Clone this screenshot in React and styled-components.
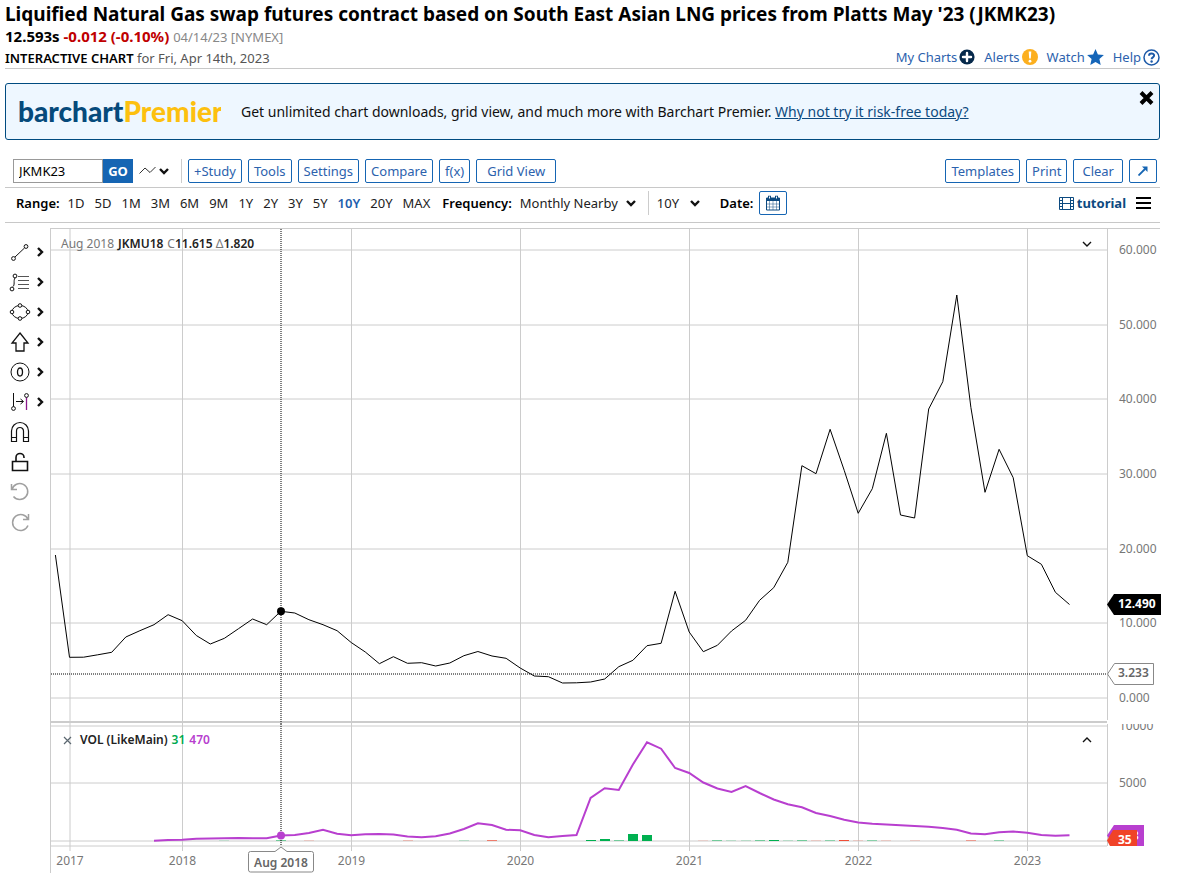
import React from "react";
import styled, { createGlobalStyle, css } from "styled-components";

const GlobalStyle = createGlobalStyle`
  * {
    box-sizing: border-box;
  }

  body {
    margin: 0;
    background: #fff;
    color: #000;
    font-family: "Noto Sans", "Open Sans", sans-serif;
    font-size: 13px;
    line-height: 18px;
  }

  button, input, select {
    font-family: inherit;
    font-size: inherit;
    line-height: inherit;
    color: inherit;
  }

  svg {
    display: block;
    flex: none;
  }
`;

const Page = styled.main`
  padding: 2px 23px 8px 5px;
`;

const Title = styled.h1`
  margin: 0;
  font-size: 19px;
  line-height: 25px;
  font-weight: 700;
`;

const Quote = styled.div`
  font-size: 15px;
  line-height: 18px;
  font-weight: 700;
`;

const Change = styled.span`
  color: #c00000;
`;

const QuoteDate = styled.span`
  font-size: 13px;
  font-weight: 400;
  color: #888;
`;

const SubHeader = styled.div`
  display: flex;
  justify-content: space-between;
  align-items: flex-start;
  height: 23px;
  padding-top: 3px;
  border-bottom: 1px solid #c8c8c8;
`;

const SubTitle = styled.h2`
  margin: 0;
  font-size: 13px;
  font-weight: 600;

  span {
    font-weight: 400;
    color: #555;
  }
`;

const Links = styled.nav`
  display: flex;
  gap: 9px;
`;

const IconLink = styled.a`
  display: flex;
  align-items: center;
  gap: 2px;
  height: 16px;
  color: #2c62ad;
  text-decoration: none;
`;

const Banner = styled.section`
  display: flex;
  align-items: center;
  gap: 20px;
  height: 57px;
  margin: 14px 0 18px;
  padding: 0 5px 0 13px;
  border: 1px solid #004b80;
  border-radius: 3px;
  background: #eef7ff;
`;

const BannerText = styled.p`
  flex: 1;
  margin: 0;
  font-size: 14px;
  color: #111;

  a {
    color: #0d4a80;
  }
`;

const CloseButton = styled.button`
  align-self: flex-start;
  margin-top: 7px;
  padding: 0;
  border: 0;
  background: none;
`;

const Toolbar = styled.div`
  display: flex;
  align-items: center;
  gap: 6px;
  height: 30px;
  padding: 0 3px 4px 8px;
  border-bottom: 1px solid #c8c8c8;
`;

const SearchForm = styled.form`
  display: flex;
`;

const SymbolInput = styled.input`
  width: 90px;
  height: 24px;
  padding: 0 5px;
  border: 1px solid #999;
  border-radius: 0;
`;

const GoButton = styled.button`
  width: 30px;
  height: 24px;
  padding: 0;
  border: 0;
  background: #1565b3;
  color: #fff;
  font-weight: 700;
`;

const ChartTypeButton = styled.button`
  display: flex;
  align-items: center;
  gap: 2px;
  height: 24px;
  margin-right: 5px;
  padding: 0;
  border: 0;
  background: none;
`;

const Divider = styled.span`
  width: 1px;
  height: 24px;
  background: #ccc;
`;

const ToolButton = styled.button`
  display: flex;
  align-items: center;
  justify-content: center;
  height: 24px;
  padding: 0 ${({ $pad = 5 }) => $pad}px;
  border: 1px solid #1565b3;
  border-radius: 2px;
  background: #fff;
  color: #2c62ad;
`;

const Spacer = styled.span`
  flex: 1;
`;

const RangeBar = styled.div`
  display: flex;
  align-items: center;
  height: 35px;
  margin-bottom: 5px;
  padding: 0 9px 4px 11px;
  border-bottom: 1px solid #c8c8c8;
`;

const BarLabel = styled.label`
  font-weight: 600;
`;

const RangeList = styled.div`
  display: flex;
  gap: 10px;
  margin: 0 12px 0 8px;
`;

const RangeButton = styled.button`
  padding: 0;
  border: 0;
  background: none;
  color: #222;

  ${({ $active }) =>
    $active &&
    css`
      color: #1f5fae;
      font-weight: 600;
    `}
`;

const SelectWrap = styled.span`
  display: flex;
  align-items: center;
  margin: 0 ${({ $after }) => $after}px 0 8px;
`;

const Select = styled.select`
  appearance: none;
  width: ${({ $width }) => $width}px;
  margin-right: -12px;
  padding: 0 12px 0 0;
  border: 0;
  background: none;
  color: #222;
`;

const DateButton = styled(ToolButton)`
  width: 28px;
  margin-left: 6px;
  padding: 0;
`;

const TutorialLink = styled.a`
  display: flex;
  align-items: center;
  gap: 3px;
  margin-right: 10px;
  color: #0d4a80;
  font-weight: 700;
  text-decoration: none;
`;

const MenuButton = styled.button`
  padding: 0;
  border: 0;
  background: none;
`;

const Workspace = styled.div`
  display: flex;
  align-items: flex-start;
`;

const ToolColumn = styled.div`
  display: flex;
  flex-direction: column;
  flex: none;
  width: 45px;
  padding: 9px 0 0 4px;
`;

const DrawButton = styled.button`
  display: flex;
  align-items: center;
  gap: 3px;
  height: 30px;
  padding: 0;
  border: 0;
  background: none;
  color: ${({ $muted }) => ($muted ? "#a0a0a0" : "#111")};
`;

const Panes = styled.div`
  flex: 1;
  min-width: 0;
`;

const Pane = styled.div`
  position: relative;
`;

const PaneSvg = styled.svg`
  width: 100%;
  overflow: ${({ $clip }) => ($clip ? "hidden" : "visible")};
  font-size: 12px;
`;

const Legend = styled.div`
  position: absolute;
  top: 8px;
  left: 11px;
  right: 67px;
  display: flex;
  align-items: center;
  gap: 4px;
  font-size: 12px;
  line-height: 16px;
  font-weight: 600;
  color: #222;
`;

const Muted = styled.span`
  font-weight: 400;
  color: #777;
`;

const Value = styled.span`
  color: ${({ $color }) => $color};
`;

const PaneToggle = styled.button`
  margin-left: auto;
  padding: 0;
  border: 0;
  background: none;
`;

const RemoveButton = styled.button`
  padding: 0 4px 0 2px;
  border: 0;
  background: none;
`;

const ranges = ["1D", "5D", "1M", "3M", "6M", "9M", "1Y", "2Y", "3Y", "5Y", "10Y", "20Y", "MAX"];

const years = [
  { label: "2017", x: 70 },
  { label: "2018", x: 182.5 },
  { label: "2019", x: 351.5 },
  { label: "2020", x: 520.5 },
  { label: "2021", x: 689.5 },
  { label: "2022", x: 858.5 },
  { label: "2023", x: 1027.5 },
];

const priceTicks = [
  { label: "60.000", y: 250 },
  { label: "50.000", y: 325 },
  { label: "40.000", y: 399 },
  { label: "30.000", y: 474 },
  { label: "20.000", y: 549 },
  { label: "10.000", y: 623 },
  { label: "0.000", y: 698 },
];

// one entry per month, Dec 2016 - Apr 2023
const prices = [
  555, 657.3, 657.2, 654.8, 652.3, 637, 630.7, 624.7, 614.7, 620.7, 635.5, 644, 638.3, 628.7,
  619, 624.7, 611.3, 613, 619.7, 624.7, 630.7, 642.5, 652, 663.7, 656.7, 663.3, 662.7, 666, 663,
  655.7, 651.5, 656, 658.3, 668, 676, 676.7, 683, 682.8, 682, 679, 666.7, 660.3, 645.7, 643.3,
  591.3, 632, 651.7, 645.3, 631, 620.3, 600.3, 587.7, 562.3, 465.7, 473.7, 429.3, 470.3, 513.3,
  488.7, 433.3, 515, 518, 409, 381.7, 295, 407.5, 492.3, 449.3, 477.7, 555.7, 564.3, 592.3,
  604.5,
];

const volumes = [
  840.7, 840, 839.7, 838.7, 838.5, 838.2, 838, 838.2, 838.3, 835.5, 835, 833, 829.7, 833.7,
  835.3, 834.3, 834, 834.5, 836.5, 837.3, 836.3, 833.5, 829, 823.3, 825, 829.8, 830.3, 835,
  837.3, 836, 835, 798, 788.3, 790, 764.5, 742.3, 748.7, 768, 773, 782.5, 788.5, 792, 786, 793,
  799.5, 804.3, 807.3, 813, 816, 819.7, 822.5, 823.7, 824.5, 825.3, 826, 826.7, 828, 829.7,
  833.5, 834.3, 832.3, 831.5, 832.8, 835, 835.8, 835.3,
];

const bars = [
  { month: 12, opacity: 0.15 },
  { month: 16, opacity: 0.5 },
  { month: 18, opacity: 0.2, down: true },
  { month: 25, opacity: 0.3, down: true },
  { month: 29, opacity: 0.2 },
  { month: 31, opacity: 0.7, down: true },
  { month: 38, height: 1 },
  { month: 39, height: 2 },
  { month: 40, opacity: 0.5 },
  { month: 41, height: 7 },
  { month: 42, height: 6 },
  { month: 46, opacity: 0.15, down: true },
  { month: 47, opacity: 0.5 },
  { month: 48, opacity: 0.2 },
  { month: 49, opacity: 0.2 },
  { month: 50, opacity: 0.5 },
  { month: 51 },
  { month: 52, opacity: 0.2 },
  { month: 53, opacity: 0.5 },
  { month: 54, opacity: 0.2, down: true },
  { month: 55, opacity: 0.4 },
  { month: 56, down: true },
  { month: 57, opacity: 0.2, down: true },
  { month: 58, opacity: 0.4 },
  { month: 59, opacity: 0.2, down: true },
  { month: 61, opacity: 0.2, down: true },
  { month: 65, opacity: 0.5, down: true },
  { month: 67, opacity: 0.4 },
];

const monthX = (i) => 55.4 + i * 14.085;

const toPoints = (values, start = 0) =>
  values.map((y, i) => `${monthX(i + start).toFixed(1)},${y}`).join(" ");

const Chevron = ({ size = 12, width = 2.4, direction = "down" }) => {
  const paths = { down: "M2 4l4 4 4-4", up: "M2 8l4-4 4 4", right: "M4 2l4 4-4 4" };
  return (
    <svg width={size} height={size} viewBox="0 0 12 12" fill="none" stroke="#111" strokeWidth={width}>
      <path d={paths[direction]} />
    </svg>
  );
};

const PlusCircle = () => (
  <svg width="16" height="16" viewBox="0 0 16 16">
    <circle cx="8" cy="8" r="7.6" fill="#06294b" />
    <path d="M8 4v8M4 8h8" stroke="#fff" strokeWidth="2.4" strokeLinecap="round" />
  </svg>
);

const AlertCircle = () => (
  <svg width="16" height="16" viewBox="0 0 16 16">
    <circle cx="8" cy="8" r="8" fill="#fcaf1e" />
    <path d="M6.7 2.5h2.6l-.5 7H7.2z" fill="#fff" />
    <circle cx="8" cy="12.2" r="1.4" fill="#fff" />
  </svg>
);

const Star = () => (
  <svg width="17" height="16" viewBox="0 0 17 16">
    <path d="M8.5 0l2.4 5.4 6 .6-4.5 4 1.3 6-5.2-3.1L3.3 16l1.3-6L.1 6l6-.6z" fill="#1565b8" />
  </svg>
);

const HelpCircle = () => (
  <svg width="17" height="17" viewBox="0 0 17 17" fill="none" stroke="#1d5aa8">
    <circle cx="8.5" cy="8.5" r="7.5" strokeWidth="1.5" />
    <path d="M6 6.8c0-3.2 5.2-3.1 5.1-.2 0 1.8-2.5 1.8-2.5 3.6" strokeWidth="2" />
    <circle cx="8.6" cy="12.5" r="1.2" fill="#1d5aa8" stroke="none" />
  </svg>
);

const Logo = () => (
  <svg width="202" height="34" viewBox="0 0 202 34" role="img" aria-label="barchart Premier">
    <text x="-1" y="27" fontFamily="Lato, sans-serif" fontWeight="900" fontSize="28" fill="#064a7b">
      barchart
      <tspan fill="#fdc00f">Premier</tspan>
    </text>
  </svg>
);

const CalendarIcon = () => (
  <svg width="16" height="16" viewBox="0 0 16 16" fill="none" stroke="#0d4a80">
    <path d="M1.5 3.5h13v11.5h-13z" />
    <path d="M1.5 3h13v2.5h-13z" fill="#0d4a80" />
    <path d="M4.5 6v9M8 6v9M11.500 6v9M1 9h14M1 12h14" strokeWidth=".8" opacity=".6" />
    <path d="M4.5 .8v3.2M11.5 .8v3.2" strokeWidth="3" />
    <path d="M4.5 1.5v2M11.5 1.5v2" stroke="#fff" />
  </svg>
);

const FilmIcon = () => (
  <svg width="15" height="13" viewBox="0 0 15 13" fill="none" stroke="#0d4a80">
    <path d="M.5 .5h14v12h-14zM3.5 .5v12M11.5 .5v12M3.5 6.5h8" />
    <path d="M.5 3.5h3M.5 6.5h3M.5 9.5h3M11.5 3.5h3M11.5 6.5h3M11.5 9.5h3" />
  </svg>
);

const drawTools = [
  {
    name: "Line",
    menu: true,
    icon: (
      <>
        <path d="M6 16L15.5 7" />
        <circle cx="4.5" cy="17.5" r="1.9" />
        <circle cx="17" cy="5.5" r="1.9" />
      </>
    ),
  },
  {
    name: "Fibonacci",
    menu: true,
    icon: (
      <>
        <path d="M3.5 16c3-2 .5-6 2.5-9" />
        <circle cx="3" cy="18" r="1.9" />
        <circle cx="6" cy="5" r="1.9" />
        <path d="M9 5.5h11M9 9.5h11M9 13.5h11M9 17.5h11" stroke="#555" />
      </>
    ),
  },
  {
    name: "Shape",
    menu: true,
    icon: (
      <>
        <ellipse cx="11" cy="11" rx="8" ry="6.5" />
        <g fill="#fff">
          <circle cx="11" cy="4.5" r="1.8" />
          <circle cx="11" cy="17.5" r="1.8" />
          <circle cx="3" cy="11" r="1.8" />
          <circle cx="19" cy="11" r="1.8" />
        </g>
      </>
    ),
  },
  {
    name: "Arrow",
    menu: true,
    icon: <path d="M11 2l8 10h-4v8H7v-8H3z" strokeWidth="1.3" />,
  },
  {
    name: "Counter",
    menu: true,
    icon: (
      <>
        <circle cx="11" cy="11" r="9" />
        <ellipse cx="11" cy="11" rx="2.5" ry="4" strokeWidth="1.3" />
      </>
    ),
  },
  {
    name: "Measure",
    menu: true,
    icon: (
      <>
        <path d="M4.5 2v14M7 10.5h7M11.5 8l3 2.5-3 2.5" />
        <path d="M17.5 6v13" stroke="#8b1a8b" strokeWidth="1.3" />
        <circle cx="4.5" cy="17.5" r="1.9" fill="#fff" />
        <circle cx="17.5" cy="4.5" r="1.9" fill="#fff" />
      </>
    ),
  },
  {
    name: "Magnet",
    icon: (
      <path
        d="M2.5 20.5V10a8.5 8.5 0 0 1 17 0v10.5h-5V10a3.5 3.5 0 0 0-7 0v10.5zM2.5 16.5h5M14.5 16.5h5"
        strokeWidth="1.2"
      />
    ),
  },
  {
    name: "Unlock",
    icon: <path d="M3.5 10.5h15v9h-15zM7 10.5V6.5a4 4 0 0 1 8 0V7" strokeWidth="1.6" />,
  },
  {
    name: "Undo",
    muted: true,
    icon: <path d="M2.5 3v5.500H8M3 8.5a8 8 0 1 1 1.5 7" strokeWidth="1.5" />,
  },
  {
    name: "Redo",
    muted: true,
    icon: <path d="M19.5 3v5.500H14M19 8.5a8 8 0 1 0 0 6" strokeWidth="1.5" />,
  },
];

const PricePane = () => (
  <Pane>
    <PaneSvg viewBox="50 228 1110 496">
      <g stroke="#ccc">
        {priceTicks.map(({ label, y }) => (
          <path key={label} d={`M51 ${y}H1107`} />
        ))}
        {years.map(({ label, x }) => (
          <path key={label} d={`M${x} 229V724`} />
        ))}
        <path d="M50 228.5H1160M50.5 228V724M1107.5 229V720" />
        <path d="M51 722H1107" strokeWidth="2" />
      </g>
      <path d="M281 229V724M51 674H1107" stroke="#000" strokeDasharray="1 1" />
      <polyline points={toPoints(prices)} fill="none" stroke="#000" />
      <circle cx="281" cy="611.3" r="4" />
      <g fill="#777">
        {priceTicks.map(({ label, y }) => (
          <text key={label} x="1119" y={y + 4}>
            {label}
          </text>
        ))}
      </g>
      <path d="M1107 604.5l7-10.5h47v21h-47z" />
      <text x="1118" y="608" fill="#fff" fontWeight="700">
        12.490
      </text>
      <path d="M1107.5 674l7-10.5h39v21h-39z" fill="#fff" stroke="#888" />
      <text x="1118" y="677" fill="#666" fontWeight="600">
        3.233
      </text>
    </PaneSvg>
    <Legend>
      <Muted>Aug 2018</Muted>
      <span>JKMU18</span>
      <span>
        <Muted>C</Muted>11.615 <Muted>Δ</Muted>1.820
      </span>
      <PaneToggle aria-label="Collapse price">
        <Chevron width={1.4} />
      </PaneToggle>
    </Legend>
  </Pane>
);

const VolumePane = () => (
  <Pane>
    <PaneSvg $clip viewBox="50 724 1110 150">
      <g stroke="#ccc">
        <path d="M51 726H1107M51 783H1107M51 841H1107M51 846H1107" />
        {years.map(({ label, x }) => (
          <path key={label} d={`M${x} 724V851`} />
        ))}
        <path d="M50.5 724V873M1107.5 724V846" />
      </g>
      <g shapeRendering="crispEdges">
        {bars.map(({ month, height = 1, opacity = 1, down }) => (
          <rect
            key={month}
            x={Math.round(monthX(month)) - 5}
            y={841 - height}
            width="10"
            height={height}
            fill={down ? "#f04e37" : "#00b050"}
            opacity={opacity}
          />
        ))}
      </g>
      <path d="M281 724V846" stroke="#000" strokeDasharray="1 1" />
      <polyline points={toPoints(volumes, 7)} fill="none" stroke="#b83fcf" strokeWidth="2" />
      <circle cx="281" cy="835.5" r="4" fill="#b83fcf" />
      <g fill="#777">
        <text x="1119" y="730">10000</text>
        <text x="1119" y="787">5000</text>
        {years.map(({ label, x }) => (
          <text key={label} x={x} y="865" textAnchor="middle">
            {label}
          </text>
        ))}
      </g>
      <path d="M1107 835.5l7-10.5h30v21h-30z" fill="#b83fcf" />
      <text x="1118" y="840" fill="#fff" fontWeight="700">
        473
      </text>
      <path d="M1107 840.5l6-10.5h24v16h-27z" fill="#f04328" />
      <text x="1118" y="844" fill="#fff" fontWeight="700">
        35
      </text>
      <path
        d="M281 847l-6 4.5h-24.500q-2 0-2 2v16.500q0 2 2 2h61q2 0 2-2v-16.500q0-2-2-2h-24.500z"
        fill="#fff"
        stroke="#888"
      />
      <text x="281" y="867" fill="#666" fontWeight="600" textAnchor="middle">
        Aug 2018
      </text>
    </PaneSvg>
    <Legend>
      <RemoveButton aria-label="Remove volume">
        <svg width="9" height="9" viewBox="0 0 9 9" stroke="#5b6770" strokeWidth="1.2">
          <path d="M1 1l7 7M8 1L1 8" />
        </svg>
      </RemoveButton>
      <span>VOL (LikeMain)</span>
      <Value $color="#00a94f">31</Value>
      <Value $color="#b83fcf">470</Value>
      <PaneToggle aria-label="Collapse volume">
        <Chevron width={1.4} direction="up" />
      </PaneToggle>
    </Legend>
  </Pane>
);

const App = () => (
  <>
    <GlobalStyle />
    <Page>
      <Title>
        Liquified Natural Gas swap futures contract based on South East Asian LNG prices from
        Platts May '23 (JKMK23)
      </Title>
      <Quote>
        12.593s <Change>-0.012 (-0.10%)</Change> <QuoteDate>04/14/23 [NYMEX]</QuoteDate>
      </Quote>
      <SubHeader>
        <SubTitle>
          INTERACTIVE CHART <span>for Fri, Apr 14th, 2023</span>
        </SubTitle>
        <Links>
          <IconLink href="#charts">
            My Charts <PlusCircle />
          </IconLink>
          <IconLink href="#alerts">
            Alerts <AlertCircle />
          </IconLink>
          <IconLink href="#watch">
            Watch <Star />
          </IconLink>
          <IconLink href="#help">
            Help <HelpCircle />
          </IconLink>
        </Links>
      </SubHeader>

      <Banner>
        <Logo />
        <BannerText>
          Get unlimited chart downloads, grid view, and much more with Barchart Premier.{" "}
          <a href="#premier">Why not try it risk-free today?</a>
        </BannerText>
        <CloseButton aria-label="Close">
          <svg width="15" height="14" viewBox="0 0 15 14" stroke="#000" strokeWidth="4">
            <path d="M2 1.5l11 11M13 1.5l-11 11" />
          </svg>
        </CloseButton>
      </Banner>

      <Toolbar>
        <SearchForm onSubmit={(e) => e.preventDefault()}>
          <SymbolInput aria-label="Symbol" defaultValue="JKMK23" />
          <GoButton>GO</GoButton>
        </SearchForm>
        <ChartTypeButton aria-label="Chart type">
          <svg width="17" height="10" viewBox="0 0 17 10" fill="none" stroke="#333">
            <path d="M.5 7.500L6 2l5 4.500L16.500 1" />
          </svg>
          <Chevron />
        </ChartTypeButton>
        <Divider />
        <ToolButton>+Study</ToolButton>
        <ToolButton>Tools</ToolButton>
        <ToolButton>Settings</ToolButton>
        <ToolButton>Compare</ToolButton>
        <ToolButton>f(x)</ToolButton>
        <ToolButton $pad={10}>Grid View</ToolButton>
        <Spacer />
        <ToolButton>Templates</ToolButton>
        <ToolButton>Print</ToolButton>
        <ToolButton $pad={8}>Clear</ToolButton>
        <ToolButton $pad={8} aria-label="Pop out">
          <svg width="10" height="10" viewBox="0 0 10 10" stroke="#1565b3" fill="#1565b3">
            <path d="M.5 9.500L7 3" strokeWidth="1.8" />
            <path d="M4 .5h5.500V6z" stroke="none" />
          </svg>
        </ToolButton>
      </Toolbar>

      <RangeBar>
        <BarLabel as="span">Range:</BarLabel>
        <RangeList>
          {ranges.map((range) => (
            <RangeButton key={range} $active={range === "10Y"}>
              {range}
            </RangeButton>
          ))}
        </RangeList>
        <BarLabel htmlFor="frequency">Frequency:</BarLabel>
        <SelectWrap $after={11}>
          <Select id="frequency" $width={117}>
            <option>Monthly Nearby</option>
          </Select>
          <Chevron />
        </SelectWrap>
        <Divider />
        <SelectWrap $after={19}>
          <Select aria-label="Period" $width={44}>
            <option>10Y</option>
          </Select>
          <Chevron />
        </SelectWrap>
        <BarLabel htmlFor="date">Date:</BarLabel>
        <DateButton id="date" aria-label="Pick date">
          <CalendarIcon />
        </DateButton>
        <Spacer />
        <TutorialLink href="#tutorial">
          <FilmIcon /> tutorial
        </TutorialLink>
        <MenuButton aria-label="Menu">
          <svg width="15" height="13" viewBox="0 0 15 13" stroke="#000" strokeWidth="2">
            <path d="M0 1h15M0 6h15M0 11h15" />
          </svg>
        </MenuButton>
      </RangeBar>

      <Workspace>
        <ToolColumn>
          {drawTools.map(({ name, icon, menu, muted }) => (
            <DrawButton key={name} aria-label={name} $muted={muted}>
              <svg width="22" height="22" viewBox="0 0 22 22" fill="none" stroke="currentColor">
                {icon}
              </svg>
              {menu && <Chevron direction="right" />}
            </DrawButton>
          ))}
        </ToolColumn>
        <Panes>
          <PricePane />
          <VolumePane />
        </Panes>
      </Workspace>
    </Page>
  </>
);

export default App;
